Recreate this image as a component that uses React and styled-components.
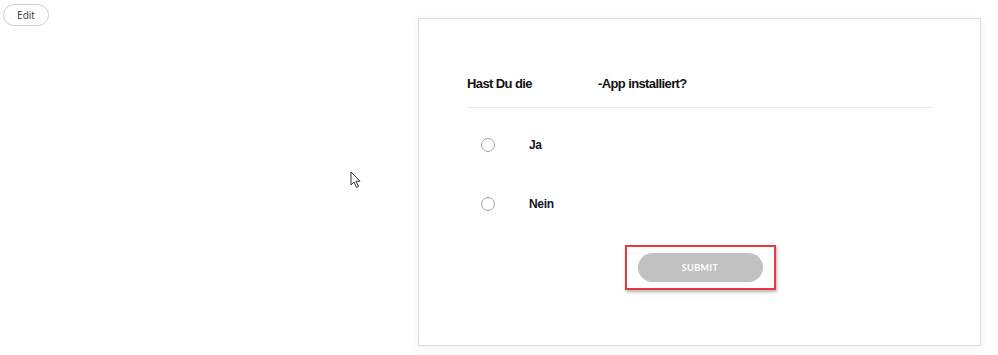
import React, { useState } from "react";
import styled, { createGlobalStyle } from "styled-components";

const GlobalStyle = createGlobalStyle`
  html, body {
    margin: 0;
    padding: 0;
    background: #ffffff;
    font-family: "Liberation Sans", Arial, sans-serif;
  }
`;

const options = ["Ja", "Nein"];

const App = () => {
  const [choice, setChoice] = useState(null);

  return (
    <>
      <GlobalStyle />
      <Page>
        <Side>
          <EditButton>Edit</EditButton>
        </Side>
        <Card>
          <Question>
            Hast Du die<BrandGap />-App installiert?
          </Question>
          <Options>
            {options.map((label) => (
              <OptionRow key={label} onClick={() => setChoice(label)}>
                <Radio checked={choice === label} />
                <OptionLabel>{label}</OptionLabel>
              </OptionRow>
            ))}
          </Options>
          <Footer>
            <Highlight>
              <SubmitButton disabled={!choice}>Submit</SubmitButton>
            </Highlight>
          </Footer>
        </Card>
        <Cursor width="12" height="18" viewBox="0 0 12 18">
          <path
            d="M1 1 L1 14 L4 11 L6.5 16.5 L8.5 15.6 L6 10.2 L10 10.2 Z"
            fill="#ffffff"
            stroke="#333333"
            strokeWidth="1"
            strokeLinejoin="round"
          />
        </Cursor>
      </Page>
    </>
  );
};

export default App;

const Page = styled.div`
  position: relative;
  display: grid;
  grid-template-columns: 418px 563px;
  align-items: start;
  width: 998px;
  height: 355px;
`;

const Side = styled.div`
  padding: 4px 0 0 3px;
`;

const EditButton = styled.button`
  width: 46px;
  height: 22px;
  padding: 0;
  border: 1px solid #cfcfcf;
  border-radius: 11px;
  background: #ffffff;
  color: #333333;
  font-family: "Open Sans", "Liberation Sans", sans-serif;
  font-size: 10px;
  cursor: pointer;
`;

const Card = styled.section`
  margin-top: 18px;
  height: 328px;
  box-sizing: border-box;
  padding: 55px 47px 0 48px;
  border: 1px solid #dedede;
  background: #ffffff;
  box-shadow: 0 2px 8px rgba(0, 0, 0, 0.06);
`;

const Question = styled.h2`
  margin: 0;
  padding-bottom: 13px;
  border-bottom: 1px solid #ececec;
  font-size: 13px;
  line-height: 20px;
  font-weight: 700;
  letter-spacing: -0.6px;
  color: #111111;
`;

const BrandGap = styled.span`
  display: inline-block;
  width: 66px;
`;

const Options = styled.div`
  display: flex;
  flex-direction: column;
  gap: 29px;
  margin-top: 22px;
`;

const OptionRow = styled.label`
  display: flex;
  align-items: center;
  height: 30px;
  padding-left: 14px;
  gap: 34px;
  cursor: pointer;
`;

const Radio = styled.span`
  width: 14px;
  height: 14px;
  box-sizing: border-box;
  border-radius: 50%;
  border: 1.5px solid #a3a3a3;
  background: ${({ checked }) =>
    checked ? "radial-gradient(circle, #333 0 3px, #fff 3.5px)" : "#fff"};
`;

const OptionLabel = styled.span`
  font-size: 12px;
  font-weight: 700;
  letter-spacing: -0.3px;
  color: #14142a;
`;

const Footer = styled.div`
  display: flex;
  justify-content: center;
  margin-top: 26px;
`;

const Highlight = styled.div`
  display: inline-flex;
  padding: 6px 11px;
  border: 2px solid #e53b3f;
  box-shadow: 1px 2px 3px rgba(0, 0, 0, 0.3);
`;

const SubmitButton = styled.button`
  width: 125px;
  height: 29px;
  border: none;
  border-radius: 15px;
  background: #c1c1c1;
  color: #ffffff;
  font-family: Lato, "Liberation Sans", sans-serif;
  font-size: 9px;
  font-weight: 700;
  letter-spacing: 0.4px;
  text-transform: uppercase;
`;

const Cursor = styled.svg`
  position: absolute;
  left: 350px;
  top: 171px;
`;
